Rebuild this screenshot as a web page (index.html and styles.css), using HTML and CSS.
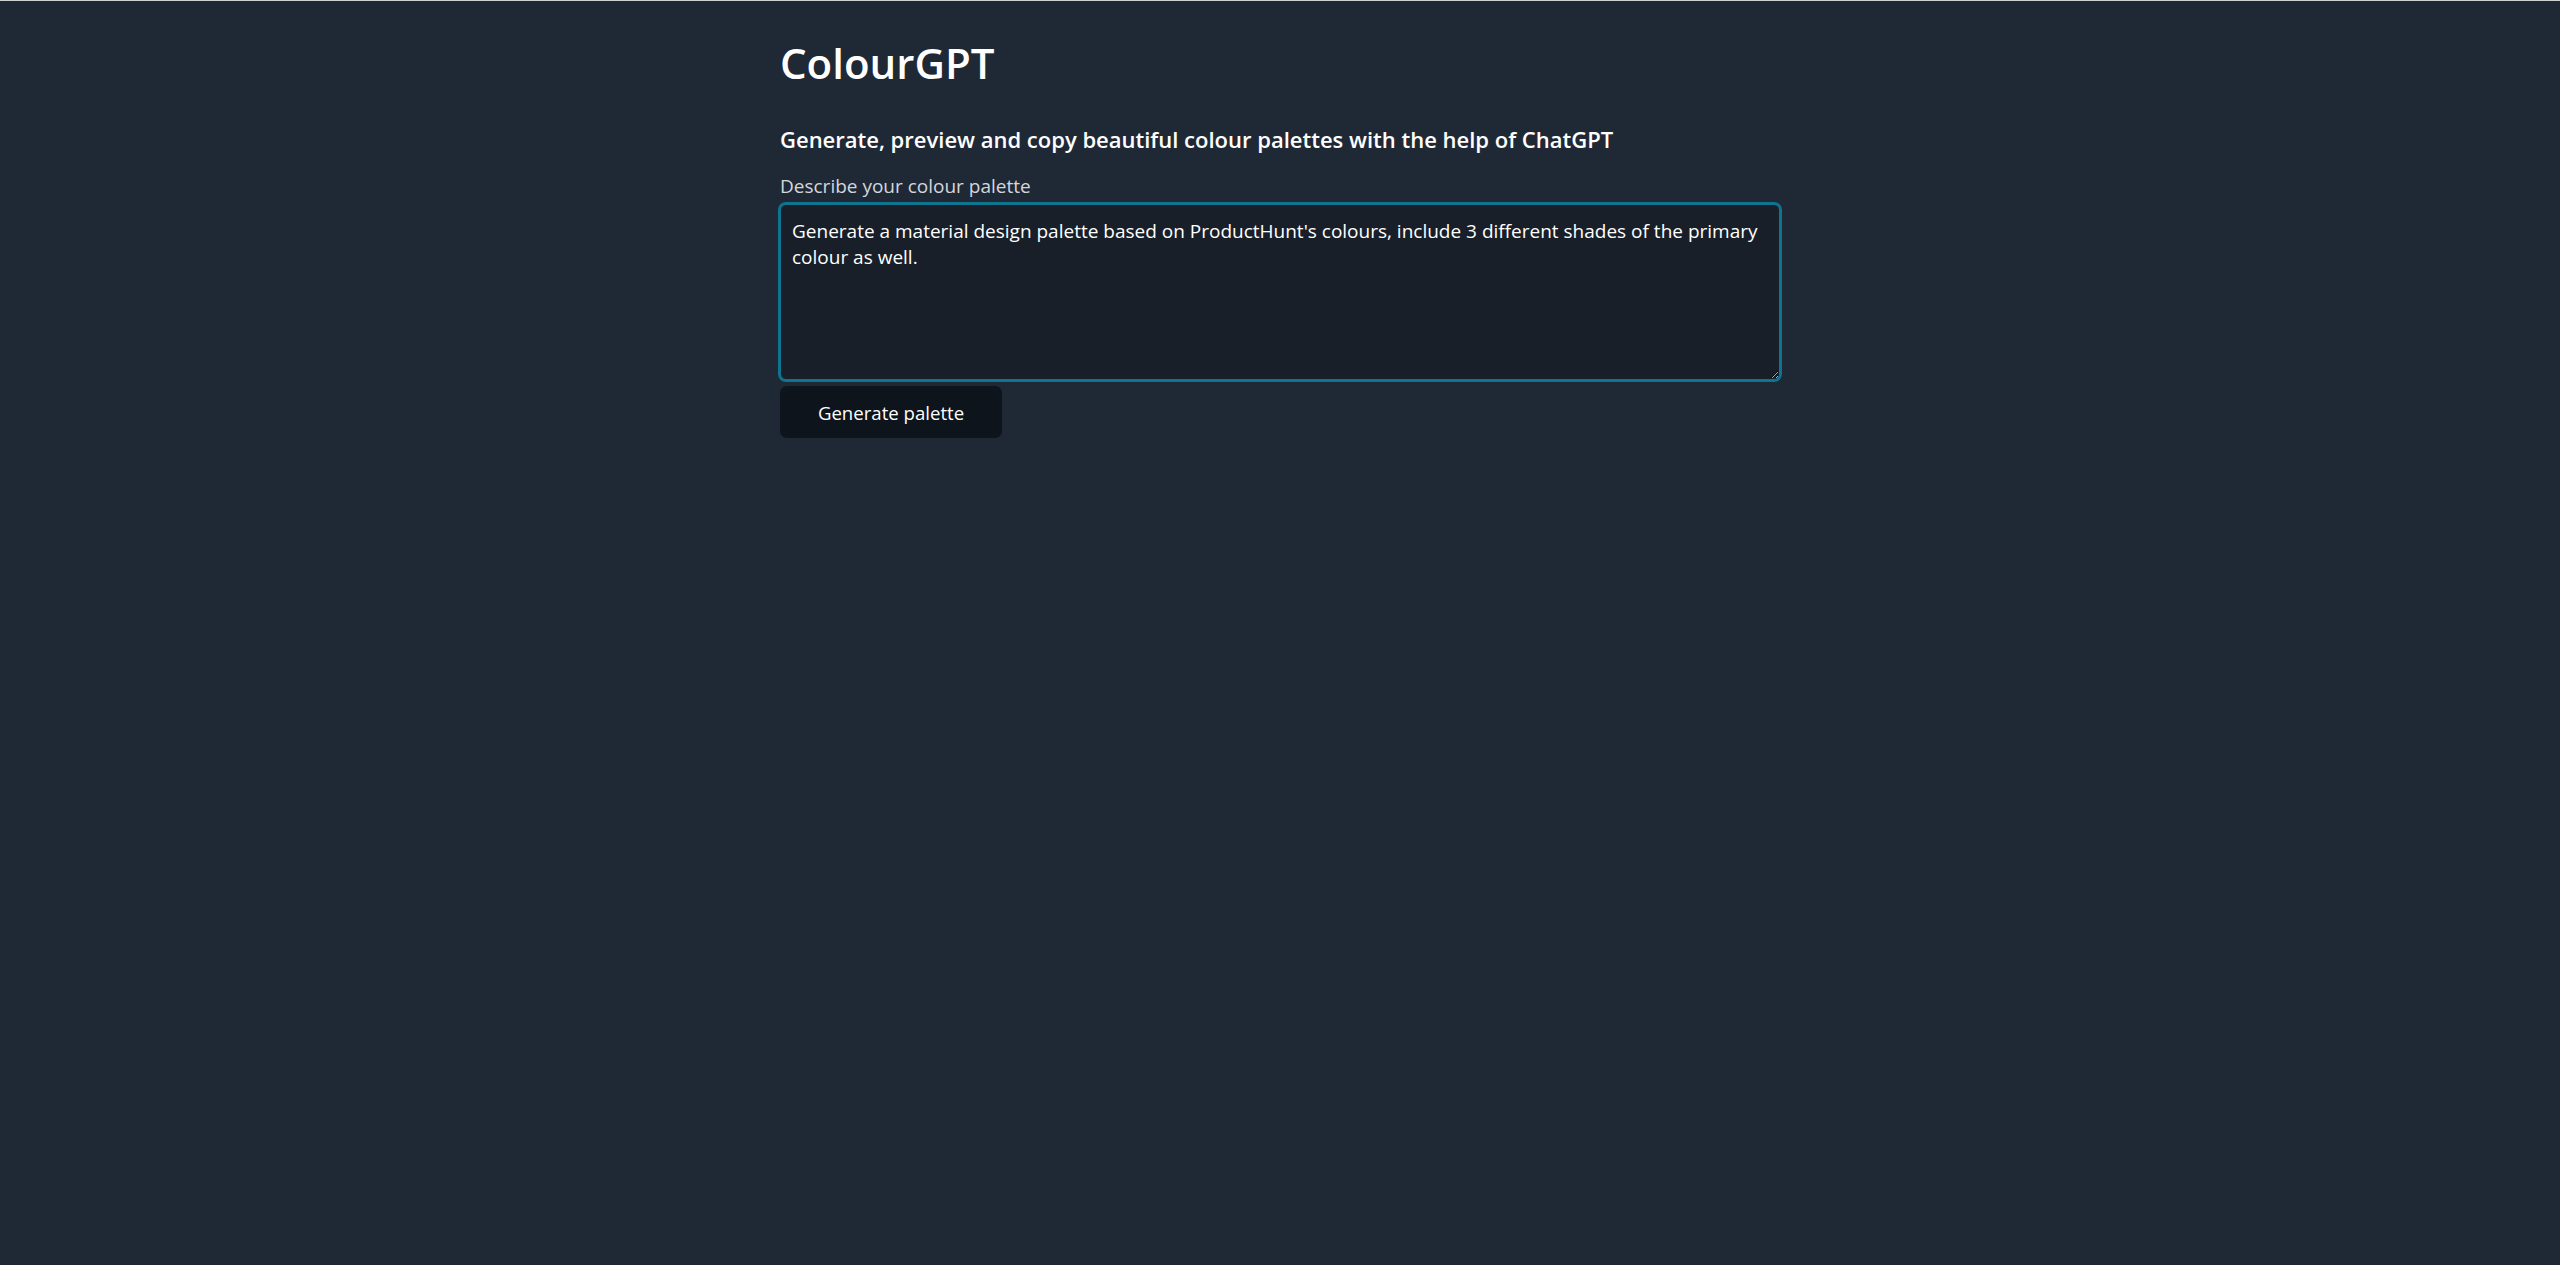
FILE: index.html
```html
<!DOCTYPE html>
<html lang="en">
<head>
    <meta charset="UTF-8">
    <meta name="viewport" content="width=device-width, initial-scale=1.0">
    <title>ColourGPT</title>
    <link rel="stylesheet" href="styles.css">
</head>
<body>
    <main class="container">
        <h1 class="title">ColourGPT</h1>
        <h2 class="subtitle">Generate, preview and copy beautiful colour palettes with the help of ChatGPT</h2>
        <label class="field-label" for="prompt">Describe your colour palette</label>
        <textarea id="prompt" class="prompt">Generate a material design palette based on ProductHunt's colours, include 3 different shades of the primary colour as well.</textarea>
        <button class="generate">Generate palette</button>
    </main>
</body>
</html>
```

FILE: styles.css
```css
* { box-sizing: border-box; margin: 0; padding: 0; }
body { min-height: 100vh; background: #1f2936; border-top: 1px solid #d0d0d0; font-family: "Open Sans", "Noto Sans", sans-serif; color: #fff; }
.container { width: 1000px; margin: 0 auto; padding-top: 38px; display: flex; flex-direction: column; align-items: flex-start; }
.title { font-size: 42px; font-weight: 600; line-height: 47px; }
.subtitle { margin-top: 39px; font-size: 22px; font-weight: 600; line-height: 28px; }
.field-label { margin-top: 20px; font-size: 19px; line-height: 26px; color: #d3d7dd; }
.prompt { margin-top: 5px; width: 100%; height: 176px; padding: 13px 11px; background: #181f29; color: #fff; border: 1px solid #0e7490; border-radius: 6px; box-shadow: 0 0 0 2px #0e7490; font-family: inherit; font-size: 19px; line-height: 26px; outline: none; }
.generate { margin-top: 6px; width: 222px; height: 52px; background: #0d141b; color: #fff; border: none; border-radius: 7px; font-family: inherit; font-size: 18.6px; cursor: pointer; }
```
